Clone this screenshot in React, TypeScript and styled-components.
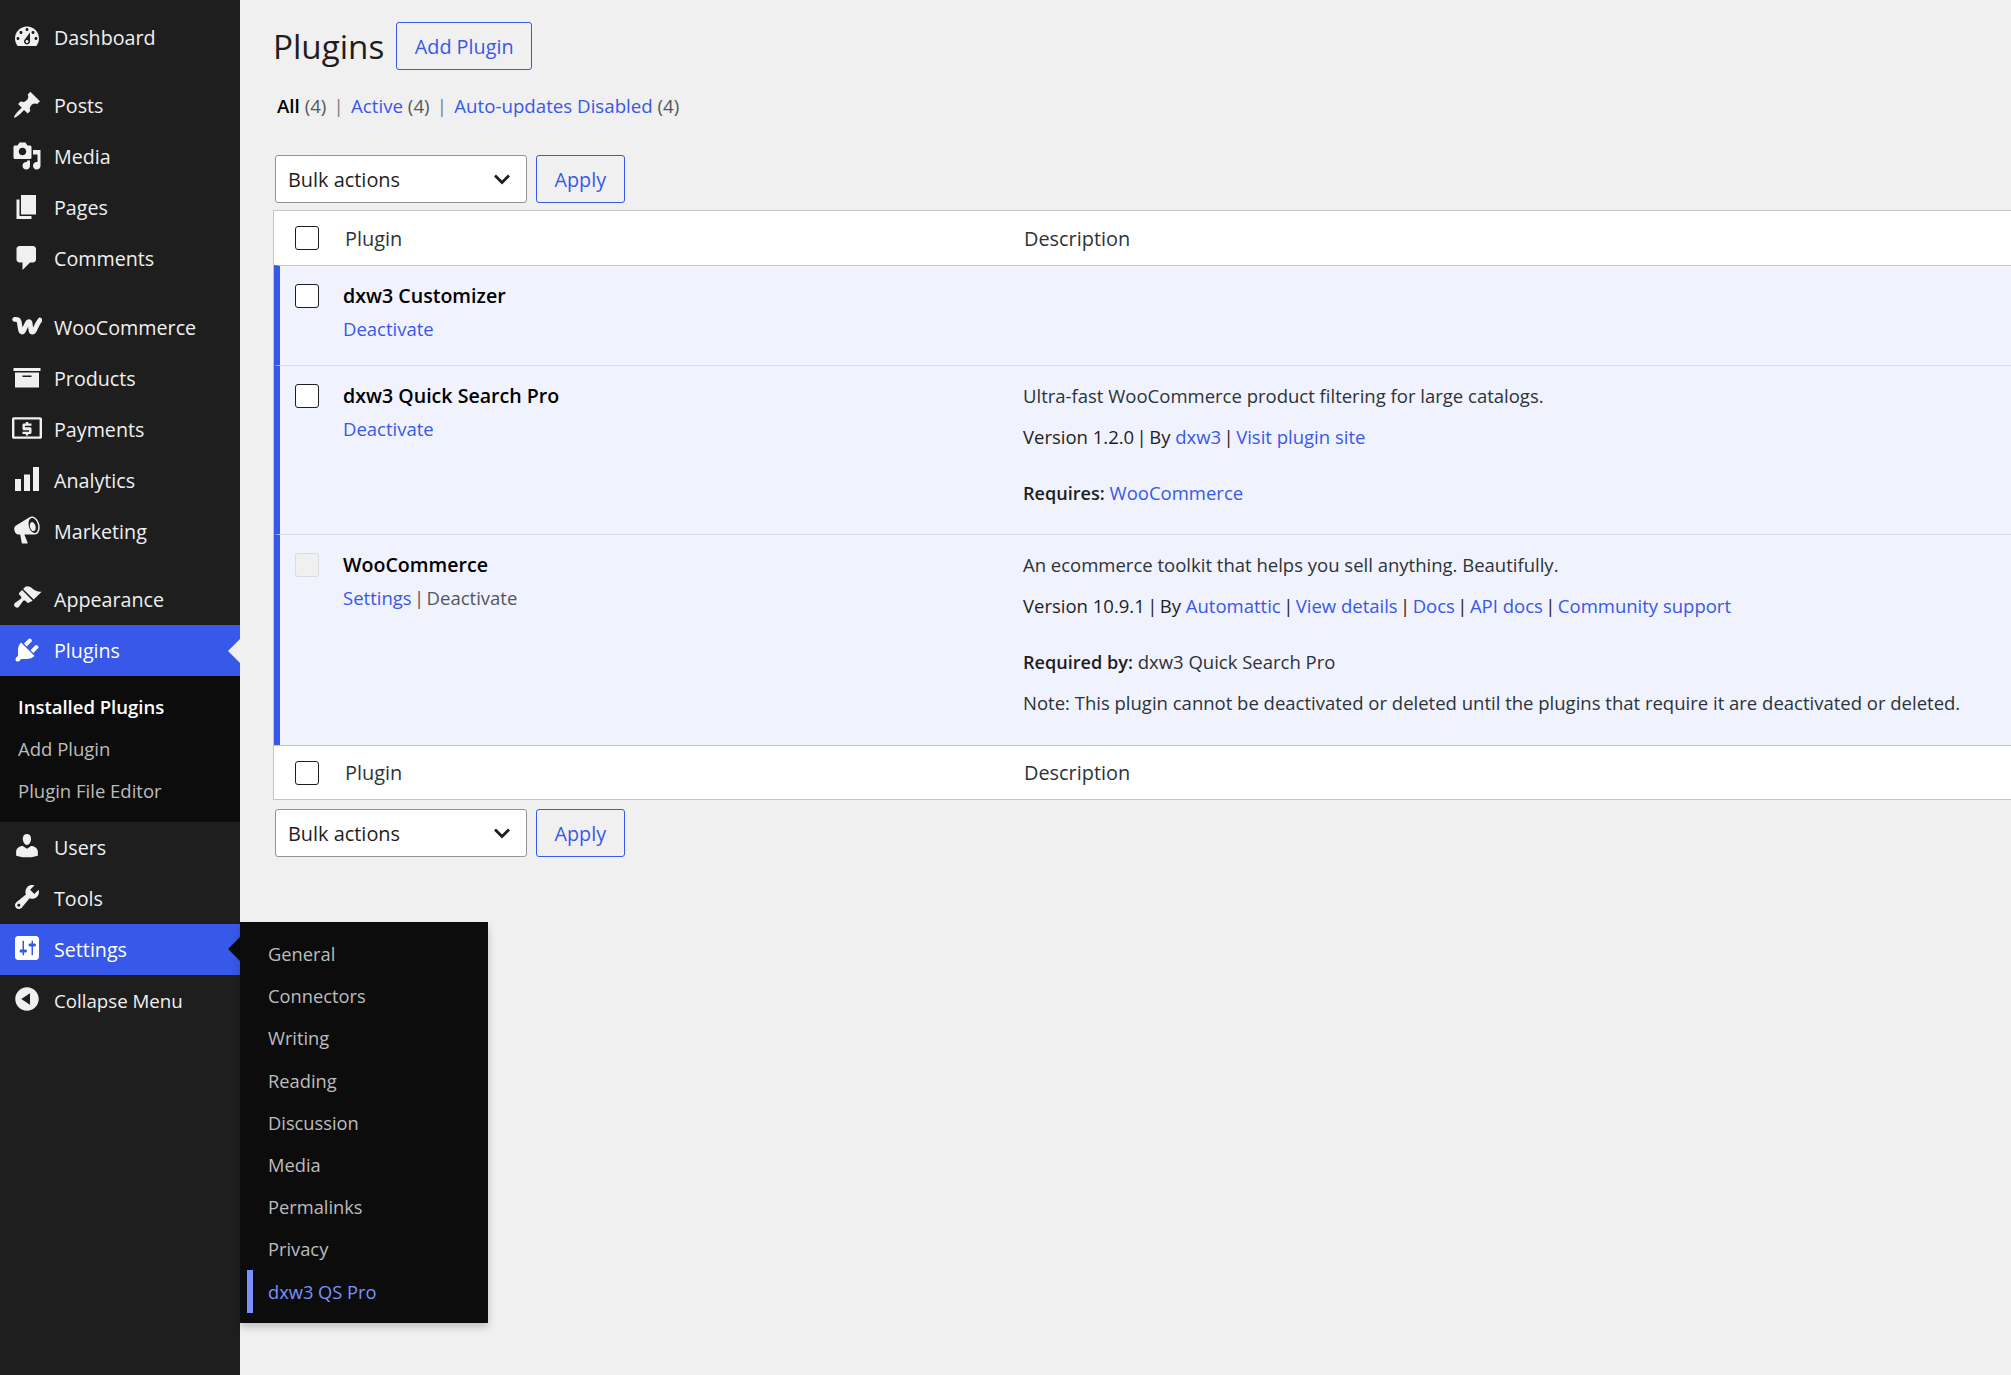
import React from 'react';
import styled, { createGlobalStyle } from 'styled-components';

const FONT = `"Open Sans", "Noto Sans", "Liberation Sans", sans-serif`;

const Global = createGlobalStyle`
  html, body { margin: 0; padding: 0; background: #f0f0f0; }
  body { font-family: ${FONT}; font-size: 18.5px; color: #1e1e1e; overflow: hidden; }
  * { box-sizing: border-box; }
  a { color: #3858e9; text-decoration: none; }
`;

const Page = styled.div`
  display: flex;
  width: 2011px;
  height: 1375px;
  overflow: hidden;
  background: #f0f0f0;
`;

const Sidebar = styled.nav`
  position: relative;
  flex: 0 0 240px;
  background: #1e1e1e;
  padding-top: 12px;
`;

const MenuItem = styled.div<{ $active?: boolean; $arrow?: string; $small?: boolean }>`
  position: relative;
  display: flex;
  align-items: center;
  height: 51.1px;
  padding-left: 12px;
  gap: 12px;
  font-size: ${p => (p.$small ? 18.7 : 19.7)}px;
  color: ${p => (p.$active ? '#fff' : '#f0f0f0')};
  background: ${p => (p.$active ? '#3858e9' : 'transparent')};
  ${p =>
    p.$arrow
      ? `&::after {
          content: '';
          position: absolute;
          right: 0;
          top: 50%;
          margin-top: -12px;
          border: 12px solid transparent;
          border-left-width: 0;
          border-right-color: ${p.$arrow};
        }`
      : ''}
`;

const MenuIcon = styled.svg`
  flex: 0 0 30px;
  width: 30px;
  height: 30px;
  margin-top: -2px;
  fill: currentColor;
`;

const MenuSeparator = styled.div`
  height: 17px;
`;

const Submenu = styled.div`
  background: #0c0c0c;
  padding: 10px 0 9.5px;
`;

const SubItem = styled.div<{ $current?: boolean }>`
  height: 42px;
  line-height: 42px;
  padding-left: 18px;
  font-size: 18.5px;
  color: ${p => (p.$current ? '#fff' : '#bcbcbc')};
  font-weight: ${p => (p.$current ? 600 : 400)};
`;

const Flyout = styled.div`
  position: absolute;
  left: 240px;
  top: 922px;
  width: 248px;
  height: 401px;
  padding: 11px 0 0;
  background: #0c0c0c;
  box-shadow: 0 4.5px 7.5px rgba(0, 0, 0, 0.2);
  z-index: 5;
`;

const FlyItem = styled.div<{ $current?: boolean }>`
  position: relative;
  height: 42.2px;
  line-height: 42px;
  padding-left: 28px;
  font-size: 18.3px;
  color: ${p => (p.$current ? '#7b90ff' : '#bcbcbc')};
  ${p =>
    p.$current
      ? `&::before {
          content: '';
          position: absolute;
          left: 7px;
          top: -0.5px;
          bottom: 0;
          width: 6px;
          background: #7b90ff;
        }`
      : ''}
`;

const Main = styled.main`
  flex: 1;
  min-width: 0;
  padding-left: 33px;
`;

const Heading = styled.div`
  display: flex;
  align-items: center;
  height: 48px;
  margin-top: 22px;
  gap: 12px;
`;

const Title = styled.h1`
  margin: 0;
  font-size: 33.2px;
  font-weight: 400;
  color: #1e1e1e;
`;

const OutlineButton = styled.button`
  height: 48px;
  padding: 0 17.5px;
  border: 1px solid #3858e9;
  border-radius: 3px;
  background: transparent;
  color: #3858e9;
  font-family: ${FONT};
  font-size: 19.8px;
  font-weight: 500;
`;

const Filters = styled.ul`
  display: flex;
  align-items: center;
  height: 36px;
  margin: 17.5px 0 31.5px 4px;
  padding: 0;
  list-style: none;
  color: #50575e;
  font-size: 18.7px;
  white-space: pre;
`;

const Sep = styled.span`
  flex: 0 0 24.7px;
  text-align: center;
  color: #787c82;
`;

const Strong = styled.strong`
  color: #000;
  font-weight: 600;
`;

const Pipe = styled.span`
  display: inline-block;
  width: 15px;
  text-align: center;
`;

const Tablenav = styled.div`
  display: flex;
  gap: 9px;
  margin-left: 2px;
`;

const SelectBox = styled.div`
  display: flex;
  align-items: center;
  justify-content: space-between;
  width: 252px;
  height: 48px;
  padding: 0 15px 0 12px;
  background: #fff;
  border: 1px solid #949494;
  border-radius: 3px;
  font-size: 19.9px;
  color: #1e1e1e;
`;

const Chevron = styled.svg`
  width: 18px;
  height: 18px;
  fill: none;
  stroke: #1e1e1e;
  stroke-width: 2.8;
`;

const Table = styled.div`
  margin: 7px 0 9px;
  border: 1px solid #c3c4c7;
  border-right: 0;
  background: #fff;
`;

const HeadRow = styled.div<{ $foot?: boolean }>`
  display: grid;
  grid-template-columns: 750px 1fr;
  align-items: center;
  height: 54px;
  font-size: 19.9px;
  color: #2c3338;
  border-top: ${p => (p.$foot ? '1px solid #c3c4c7' : '0')};
`;

const CheckHead = styled.div`
  display: flex;
  align-items: center;
  padding-left: 21px;
  gap: 26px;
`;

const Row = styled.div<{ $height: number; $first?: boolean }>`
  display: grid;
  grid-template-columns: 743px 1fr;
  height: ${p => p.$height}px;
  background: #f0f2fe;
  border-left: 6px solid #3858e9;
  border-top: 1px solid ${p => (p.$first ? '#c3c4c7' : '#dcdce8')};
`;

const PluginCell = styled.div`
  display: flex;
  gap: 24px;
  padding: 18px 0 0 15px;
`;

const Check = styled.span<{ $disabled?: boolean }>`
  flex: 0 0 24px;
  width: 24px;
  height: 24px;
  border: 1px solid ${p => (p.$disabled ? '#dcdcde' : '#1e1e1e')};
  border-radius: 3px;
  background: ${p => (p.$disabled ? '#f0f0f1' : '#fff')};
`;

const PluginText = styled.div`
  display: flex;
  flex-direction: column;
  margin-top: -1px;
`;

const PluginName = styled.div`
  height: 26px;
  line-height: 26px;
  font-size: 19.6px;
  font-weight: 600;
  color: #000;
`;

const RowActions = styled.div`
  height: 26px;
  margin-top: 7px;
  line-height: 26px;
  font-size: 18.5px;
  color: #50575e;
  white-space: pre;
`;

const DescCell = styled.div`
  padding-top: 17px;
  font-size: 18.5px;
  color: #2c3338;
`;

const DescLine = styled.div<{ $mt?: number; $dark?: boolean }>`
  height: 26px;
  line-height: 26px;
  margin-top: ${p => p.$mt ?? 0}px;
  color: ${p => (p.$dark ? '#1e1e1e' : '#2c3338')};
  white-space: pre;
`;

const Bold = styled.b`
  color: #1e1e1e;
  font-weight: 600;
  font-size: 18.1px;
`;

type IconProps = { d?: string; children?: React.ReactNode };
const Icon = ({ d, children }: IconProps) => (
  <MenuIcon viewBox="0 0 20 20" aria-hidden="true">
    {d ? <path d={d} /> : children}
  </MenuIcon>
);

const P = {
  dashboard:
    'M3.76 16h12.48c1.1-1.37 1.76-3.11 1.76-5 0-4.42-3.58-8-8-8s-8 3.58-8 8c0 1.89.66 3.63 1.76 5zM10 4c.55 0 1 .45 1 1s-.45 1-1 1-1-.45-1-1 .45-1 1-1zM6 6c.55 0 1 .45 1 1s-.45 1-1 1-1-.45-1-1 .45-1 1-1zm8 0c.55 0 1 .45 1 1s-.45 1-1 1-1-.45-1-1 .45-1 1-1zm-5.37 5.55L12 7v6c0 1.1-.9 2-2 2s-2-.9-2-2c0-.57.24-1.08.63-1.45zM4 10c.55 0 1 .45 1 1s-.45 1-1 1-1-.45-1-1 .45-1 1-1zm12 0c.55 0 1 .45 1 1s-.45 1-1 1-1-.45-1-1 .45-1 1-1zm-5 3c0-.55-.45-1-1-1s-1 .45-1 1 .45 1 1 1 1-.45 1-1z',
  post:
    'M10.44 3.02l1.82-1.82 6.36 6.35-1.83 1.82c-1.05-.68-2.48-.57-3.41.36l-.75.75c-.92.93-1.04 2.35-.35 3.41l-1.83 1.82-2.41-2.41-2.8 2.79c-.42.42-3.38 2.71-3.8 2.29s1.86-3.39 2.28-3.81l2.79-2.79L4.1 9.36l1.83-1.82c1.05.69 2.48.57 3.4-.36l.75-.75c.93-.92 1.05-2.35.36-3.41z',
  media:
    'M13 11V4c0-.55-.45-1-1-1h-1.67L9 1H5L3.67 3H2c-.55 0-1 .45-1 1v7c0 .55.45 1 1 1h10c.55 0 1-.45 1-1zM7 4.5c1.38 0 2.5 1.12 2.5 2.5S8.38 9.5 7 9.5 4.5 8.38 4.5 7 5.62 4.5 7 4.5zM14 6h5v10.5c0 1.38-1.12 2.5-2.5 2.5S14 17.88 14 16.5s1.12-2.5 2.5-2.5c.17 0 .34.02.5.05V9h-3V6zm-4 8.05V13h2v3.5c0 1.38-1.12 2.5-2.5 2.5S7 17.88 7 16.5 8.12 14 9.5 14c.17 0 .34.02.5.05z',
  page: 'M6 15V2h10v13H6zm-1 1h8v2H3V5h2v11z',
  comments:
    'M5 2h9c1.1 0 2 .9 2 2v7c0 1.1-.9 2-2 2h-2l-5 5v-5H5c-1.1 0-2-.9-2-2V4c0-1.1.9-2 2-2z',
  archive: 'M19 4v2H1V4h18zM2 7h16v10H2V7zm11 3V9H7v1h6z',
  bars: 'M18 18V2h-4v16h4zm-6 0V7H8v11h4zm-6 0v-8H2v8h4z',
  megaphone:
    'M18.15 5.94c.46 1.62.38 3.22-.02 4.48-.42 1.28-1.26 2.18-2.3 2.48-.16.06-.26.06-.4.06-.06.02-.12.02-.18.02-.06.02-.14.02-.22.02h-6.8l2.22 5.5c.02.14-.06.26-.14.34-.08.1-.24.16-.34.16H6.95c-.1 0-.26-.06-.34-.16-.08-.08-.16-.2-.14-.34l-1-5.5H4.25l-.02-.02c-.5.06-1.08-.18-1.54-.62s-.88-1.08-1.06-1.88c-.24-.8-.2-1.56-.02-2.2.18-.62.58-1.08 1.06-1.3l.02-.02 9-5.4c.1-.06.18-.1.24-.16.06-.04.14-.08.24-.12.16-.08.28-.12.5-.18 1.04-.3 2.24.1 3.22 1 .98.88 1.8 2.24 2.26 3.86zm-2.58 5.98h-.02c.4-.1.74-.34 1.04-.7.58-.7.86-1.76.86-3.04 0-.64-.1-1.3-.26-1.98-.34-1.36-1.02-2.5-1.78-3.24s-1.68-1.1-2.46-.88c-.82.22-1.4.96-1.7 2-.32 1.04-.28 2.36.06 3.72.38 1.36 1 2.5 1.8 3.24.78.74 1.62 1.1 2.46.88zm-1-6.66c.46.46.86 1.14 1.06 1.98.22.8.22 1.58.06 2.2-.18.62-.56 1.08-1.04 1.2-.5.14-1.06-.06-1.54-.52-.48-.44-.88-1.12-1.1-1.92-.2-.8-.2-1.58-.02-2.2.18-.62.54-1.08 1.04-1.22.48-.12 1.04.06 1.54.48z',
  appearance:
    'M14.48 11.06L7.41 3.99l1.5-1.5c.5-.56 2.3-.47 3.51.32 1.21.8 1.43 1.28 2.91 2.1 1.18.64 2.45 1.26 4.45.85zm-.71.71L6.7 4.7 4.93 6.47c-.39.39-.39 1.02 0 1.41l1.06 1.06c.39.39.39 1.03 0 1.42-.6.6-1.43 1.11-2.21 1.69-.35.26-.7.53-1.01.84C1.43 13.23.99 14.9 2 15.9s2.67.56 3.02-.78c.31-.31.58-.66.84-1.01.58-.78 1.09-1.61 1.69-2.21.39-.39 1.03-.39 1.42 0l1.06 1.06c.39.39 1.02.39 1.41 0z',
  plugins:
    'M13.11 4.36L9.87 7.6 8 5.73l3.24-3.24c.35-.34 1.05-.2 1.56.32.52.51.66 1.21.31 1.55zm-8 1.77l.91-1.12 9.01 9.01-1.19.84c-.71.71-2.63 1.16-3.82 1.16H6.14L4.9 17.26c-.59.59-1.54.59-2.12 0-.59-.58-.59-1.53 0-2.12l1.24-1.24v-3.88c0-1.13.4-3.19 1.09-3.89zm7.26 3.97l3.24-3.24c.34-.35 1.04-.21 1.55.31.52.51.66 1.21.31 1.55l-3.24 3.25z',
  users:
    'M10 9.25c-2.27 0-2.73-3.44-2.73-3.44C7 4.02 7.82 2 9.97 2c2.16 0 2.98 2.02 2.71 3.81 0 0-.41 3.44-2.68 3.44zm0 2.57L12.72 10c2.39 0 4.52 1.73 4.52 3.93v2.49s-3.65 1.13-7.24 1.13c-3.65 0-7.24-1.13-7.24-1.13v-2.49c0-2.25 1.94-3.88 4.47-3.88z',
  tools:
    'M16.68 9.77c-1.34 1.34-3.3 1.67-4.95.99l-5.41 6.52c-.99.99-2.59.99-3.58 0s-.99-2.59 0-3.57l6.52-5.42c-.68-1.65-.35-3.61.99-4.95 1.28-1.28 3.12-1.62 4.72-1.06l-2.89 2.89 2.82 2.82 2.86-2.87c.53 1.58.18 3.39-1.08 4.65zM3.81 16.21c.4.39 1.04.39 1.43 0 .4-.4.4-1.04 0-1.43-.39-.4-1.03-.4-1.43 0-.39.39-.39 1.03 0 1.43z',
  settings:
    'M18 16V4c0-1.1-.9-2-2-2H4c-1.1 0-2 .9-2 2v12c0 1.1.9 2 2 2h12c1.1 0 2-.9 2-2zM8 11h1c.55 0 1 .45 1 1s-.45 1-1 1H8v1.5c0 .28-.22.5-.5.5s-.5-.22-.5-.5V13H6c-.55 0-1-.45-1-1s.45-1 1-1h1V5.5c0-.28.22-.5.5-.5s.5.22.5.5V11zm5-2h-1c-.55 0-1-.45-1-1s.45-1 1-1h1V5.5c0-.28.22-.5.5-.5s.5.22.5.5V7h1c.55 0 1 .45 1 1s-.45 1-1 1h-1v5.5c0 .28-.22.5-.5.5s-.5-.22-.5-.5V9z',
  collapse:
    'M10 2.16c4.33 0 7.84 3.51 7.84 7.84s-3.51 7.84-7.84 7.84S2.16 14.33 2.16 10 5.71 2.16 10 2.16zm2 11.72V6.12L6.18 9.97z',
  payments:
    'M1.2 2.8h17.6c.66 0 1.2.54 1.2 1.2v12c0 .66-.54 1.2-1.2 1.2H1.2C.54 17.2 0 16.66 0 16V4c0-.66.54-1.2 1.2-1.2zM1.6 4.4v11.2h16.8V4.4H1.6zM9.2 6h1.6v1h2.2v1.5H8.6v1h3.4c.55 0 1 .45 1 1V13c0 .55-.45 1-1 1h-1.2v1H9.2v-1H7v-1.5h4.4v-1H8c-.55 0-1-.45-1-1V8c0-.55.45-1 1-1h1.2V6z',
};

const Links = ({ items }: { items: string[] }) => (
  <>
    {items.map((t, i) => (
      <React.Fragment key={t}>
        {i > 0 ? <Pipe>|</Pipe> : null}
        <a href="#">{t}</a>
      </React.Fragment>
    ))}
  </>
);

const flyItems = ['General', 'Connectors', 'Writing', 'Reading', 'Discussion', 'Media', 'Permalinks', 'Privacy'];

const BulkBar = () => (
  <Tablenav>
    <SelectBox>
      Bulk actions
      <Chevron viewBox="0 0 18 18" aria-hidden="true">
        <path d="M2 5.5 9 12.5l7-7" />
      </Chevron>
    </SelectBox>
    <OutlineButton>Apply</OutlineButton>
  </Tablenav>
);

const TableHeading = ({ foot }: { foot?: boolean }) => (
  <HeadRow $foot={foot}>
    <CheckHead>
      <Check />
      Plugin
    </CheckHead>
    <div>Description</div>
  </HeadRow>
);

export default function App() {
  return (
    <>
      <Global />
      <Page>
        <Sidebar>
          <MenuItem><Icon d={P.dashboard} />Dashboard</MenuItem>
          <MenuSeparator />
          <MenuItem><Icon d={P.post} />Posts</MenuItem>
          <MenuItem><Icon d={P.media} />Media</MenuItem>
          <MenuItem><Icon d={P.page} />Pages</MenuItem>
          <MenuItem><Icon d={P.comments} />Comments</MenuItem>
          <MenuSeparator />
          <MenuItem>
            <Icon>
              <path
                fill="none"
                stroke="currentColor"
                strokeWidth="3.2"
                strokeLinecap="round"
                strokeLinejoin="round"
                d="M1.8 5.6c1.7-.2 2.7.2 3 1.6l.9 5.4c.3 1.7 1.3 1.9 2.1.4l2.4-5c.6-1.3 1.7-1.1 1.9.3l.5 4.4c.2 1.7 1.3 1.9 2.2.4 1.3-2.1 2-4.8 3.8-7"
              />
            </Icon>
            WooCommerce
          </MenuItem>
          <MenuItem><Icon d={P.archive} />Products</MenuItem>
          <MenuItem><Icon d={P.payments} />Payments</MenuItem>
          <MenuItem><Icon d={P.bars} />Analytics</MenuItem>
          <MenuItem><Icon d={P.megaphone} />Marketing</MenuItem>
          <MenuSeparator />
          <MenuItem><Icon d={P.appearance} />Appearance</MenuItem>
          <MenuItem $active $arrow="#f0f0f0"><Icon d={P.plugins} />Plugins</MenuItem>
          <Submenu>
            <SubItem $current>Installed Plugins</SubItem>
            <SubItem>Add Plugin</SubItem>
            <SubItem>Plugin File Editor</SubItem>
          </Submenu>
          <MenuItem><Icon d={P.users} />Users</MenuItem>
          <MenuItem><Icon d={P.tools} />Tools</MenuItem>
          <MenuItem $active $arrow="#0c0c0c"><Icon d={P.settings} />Settings</MenuItem>
          <MenuItem $small><Icon d={P.collapse} />Collapse Menu</MenuItem>
          <Flyout>
            {flyItems.map(t => (
              <FlyItem key={t}>{t}</FlyItem>
            ))}
            <FlyItem $current>dxw3 QS Pro</FlyItem>
          </Flyout>
        </Sidebar>
        <Main>
          <Heading>
            <Title>Plugins</Title>
            <OutlineButton>Add Plugin</OutlineButton>
          </Heading>
          <Filters>
            <li><Strong>All</Strong> (4)</li>
            <Sep>|</Sep>
            <li><a href="#">Active</a> (4)</li>
            <Sep>|</Sep>
            <li><a href="#">Auto-updates Disabled</a> (4)</li>
          </Filters>
          <BulkBar />
          <Table>
            <TableHeading />
            <Row $height={100} $first>
              <PluginCell>
                <Check />
                <PluginText>
                  <PluginName>dxw3 Customizer</PluginName>
                  <RowActions><a href="#">Deactivate</a></RowActions>
                </PluginText>
              </PluginCell>
              <DescCell />
            </Row>
            <Row $height={169}>
              <PluginCell>
                <Check />
                <PluginText>
                  <PluginName>dxw3 Quick Search Pro</PluginName>
                  <RowActions><a href="#">Deactivate</a></RowActions>
                </PluginText>
              </PluginCell>
              <DescCell>
                <DescLine>Ultra-fast WooCommerce product filtering for large catalogs.</DescLine>
                <DescLine $mt={15} $dark>Version 1.2.0<Pipe>|</Pipe>By <Links items={['dxw3', 'Visit plugin site']} /></DescLine>
                <DescLine $mt={30}><Bold>Requires:</Bold> <a href="#">WooCommerce</a></DescLine>
              </DescCell>
            </Row>
            <Row $height={211}>
              <PluginCell>
                <Check $disabled />
                <PluginText>
                  <PluginName>WooCommerce</PluginName>
                  <RowActions><a href="#">Settings</a><Pipe>|</Pipe>Deactivate</RowActions>
                </PluginText>
              </PluginCell>
              <DescCell>
                <DescLine>An ecommerce toolkit that helps you sell anything. Beautifully.</DescLine>
                <DescLine $mt={15} $dark>Version 10.9.1<Pipe>|</Pipe>By <Links items={['Automattic', 'View details', 'Docs', 'API docs', 'Community support']} /></DescLine>
                <DescLine $mt={30}><Bold>Required by:</Bold> dxw3 Quick Search Pro</DescLine>
                <DescLine $mt={15}>Note: This plugin cannot be deactivated or deleted until the plugins that require it are deactivated or deleted.</DescLine>
              </DescCell>
            </Row>
            <TableHeading foot />
          </Table>
          <BulkBar />
        </Main>
      </Page>
    </>
  );
}
